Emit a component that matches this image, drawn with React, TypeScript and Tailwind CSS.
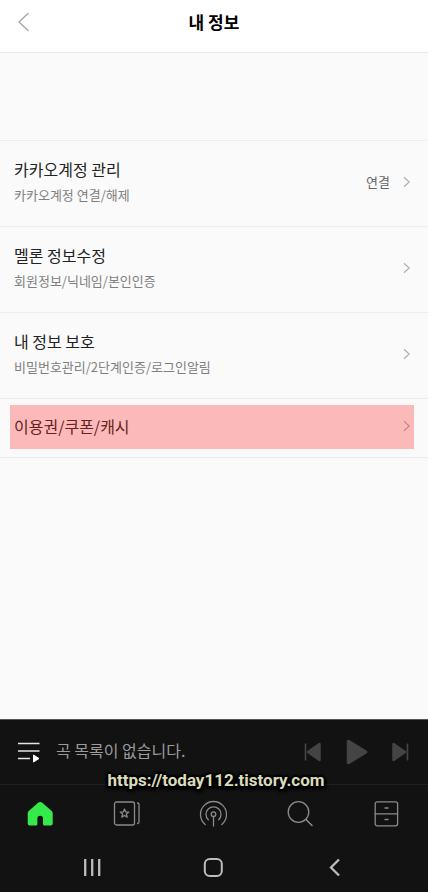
import type { ReactNode } from "react"

type MenuItem = {
  title: string
  description?: string
  value?: string
  highlighted?: boolean
}

const menuItems: MenuItem[] = [
  { title: "카카오계정 관리", description: "카카오계정 연결/해제", value: "연결" },
  { title: "멜론 정보수정", description: "회원정보/닉네임/본인인증" },
  { title: "내 정보 보호", description: "비밀번호관리/2단계인증/로그인알림" },
  { title: "이용권/쿠폰/캐시", highlighted: true },
]

function IconButton({ label, children }: { label: string; children: ReactNode }) {
  return (
    <button type="button" aria-label={label} className="flex size-7 items-center justify-center">
      {children}
    </button>
  )
}

function Header() {
  return (
    <header className="grid h-[53px] grid-cols-[1fr_auto_1fr] items-start border-b border-[#e8e8e8] bg-white pt-2">
      <div className="pl-[10px]">
        <IconButton label="뒤로">
          <svg width="28" height="28" viewBox="0 0 28 28" fill="none" stroke="#a3a3a3" strokeWidth="1.2">
            <path d="M18.5 5 9 14l9.5 9" />
          </svg>
        </IconButton>
      </div>
      <h1 className="text-[17px] leading-7 font-bold text-black">내 정보</h1>
    </header>
  )
}

function MenuRow({ title, description, value, highlighted }: MenuItem) {
  return (
    <li className="relative border-b border-[#ededed]">
      <a href="#" className={`flex items-center justify-between pr-4 pb-1 pl-[14px] ${highlighted ? "h-[58px]" : "h-[85px]"}`}>
        <span className="flex flex-col">
          <span className="text-base leading-[26px] text-[#222222]">{title}</span>
          {description && <span className="text-[13px] leading-[26px] text-[#808080]">{description}</span>}
        </span>
        <span className="flex items-center gap-3">
          {value && <span className="text-[13px] leading-6 text-[#666666]">{value}</span>}
          <svg width="10" height="12" viewBox="0 0 10 12" fill="none" stroke="#b0b0b0" strokeWidth="1.2">
            <path d="M2 1.2 7.2 6 2 10.8" />
          </svg>
        </span>
      </a>
      {/* Highlight marker */}
      {highlighted && <div className="pointer-events-none absolute top-[6px] right-[14px] bottom-2 left-[10px] bg-[#ff2525]/30" />}
    </li>
  )
}

function Player() {
  return (
    <section className="flex h-[66px] items-center border-t border-b border-t-[#555555] border-b-[#202020] px-[14px]">
      <IconButton label="재생 목록">
        <svg width="28" height="28" viewBox="0 0 28 28" fill="none">
          <path d="M4 5.5h21.500M4 13h21.500M4 20.500h12" stroke="#e5e5e5" strokeWidth="1.5" />
          <path d="M19.500 17v7l5.500-3.500z" fill="#fff" stroke="#fff" strokeLinejoin="round" />
        </svg>
      </IconButton>
      <p className="ml-[14px] flex-1 pb-1 text-base text-[#9b9b9b]">곡 목록이 없습니다.</p>
      <div className="flex items-center gap-4 text-[#444444]">
        <IconButton label="이전 곡">
          <svg width="28" height="28" viewBox="0 0 28 28" fill="currentColor" stroke="currentColor" strokeLinejoin="round">
            <path d="M7.500 5.500v17" strokeWidth="1.7" />
            <path d="M21.500 6v16L10 14z" strokeWidth="2.500" />
          </svg>
        </IconButton>
        <IconButton label="재생">
          <svg width="28" height="28" viewBox="0 0 28 28" fill="currentColor" stroke="currentColor" strokeLinejoin="round">
            <path d="M6.500 3.500v21L23.500 14z" strokeWidth="3.500" />
          </svg>
        </IconButton>
        <IconButton label="다음 곡">
          <svg width="28" height="28" viewBox="0 0 28 28" fill="currentColor" stroke="currentColor" strokeLinejoin="round">
            <path d="M21.500 5.500v17" strokeWidth="1.7" />
            <path d="M7.500 6v16L19 14z" strokeWidth="2.500" />
          </svg>
        </IconButton>
      </div>
    </section>
  )
}

function TabBar() {
  return (
    <nav className="flex h-[57px] items-center justify-between pr-7 pl-[26px] text-[#8a8a8a]">
      <IconButton label="홈">
        <svg width="28" height="28" viewBox="0 0 28 28" fill="#35e94a">
          <path d="M12.400 2.600c1-.9 2.600-.9 3.600 0l9.400 8.100c.9.800 1.300 1.500 1.300 2.600V23.500a2 2 0 0 1-2 2H18.500a1.500 1.500 0 0 1-1.500-1.500V18.500a2.800 2.800 0 0 0-5.600 0V24a1.500 1.500 0 0 1-1.500 1.500H3.700a2 2 0 0 1-2-2V13.300c0-1.100.4-1.800 1.300-2.600z" />
        </svg>
      </IconButton>
      <IconButton label="음악">
        <svg width="28" height="28" viewBox="0 0 28 28" fill="none" stroke="currentColor" strokeWidth="1.3" strokeLinejoin="round">
          <rect x="1.5" y="2" width="20" height="23" rx="2" />
          <path d="M24 3h.5A1.500 1.500 0 0 1 26 4.500V22a1.500 1.500 0 0 1-1.500 1.500H24" />
          <path d="m11.500 9 1.200 2.900 3.100.2-2.400 2 .8 3-2.700-1.600-2.700 1.600.8-3-2.400-2 3.100-.2z" />
        </svg>
      </IconButton>
      <IconButton label="라디오">
        <svg width="28" height="28" viewBox="0 0 28 28" fill="none" stroke="currentColor" strokeWidth="1.3" strokeLinecap="round">
          <path d="M6.200 24.500A13 13 0 1 1 22.800 24.500" />
          <path d="M9.300 19.700A7.500 7.500 0 1 1 19.700 19.700" />
          <circle cx="14.5" cy="14.2" r="2.3" />
          <path d="M14.500 16.500v9.500" />
        </svg>
      </IconButton>
      <IconButton label="검색">
        <svg width="28" height="28" viewBox="0 0 28 28" fill="none" stroke="currentColor" strokeWidth="1.3" strokeLinecap="round">
          <circle cx="12.5" cy="12" r="10.3" />
          <path d="m20 19.500 6 6" strokeWidth="1.6" />
        </svg>
      </IconButton>
      <IconButton label="보관함">
        <svg width="28" height="28" viewBox="0 0 28 28" fill="none" stroke="currentColor" strokeWidth="1.3" strokeLinecap="round">
          <rect x="3.2" y="1.8" width="22.4" height="24" rx="2" />
          <path d="M3.200 13.800h22.400M13 8h3M13 19.500h3" />
        </svg>
      </IconButton>
    </nav>
  )
}

function SystemBar() {
  return (
    <div className="flex h-[50px] items-center justify-between pr-20 pl-[78px] text-[#bdbdbd]">
      <IconButton label="최근 앱">
        <svg width="28" height="28" viewBox="0 0 28 28" fill="none" stroke="currentColor" strokeWidth="2.3">
          <path d="M7.200 6v17M14.200 6v17M21.200 6v17" />
        </svg>
      </IconButton>
      <IconButton label="홈 화면">
        <svg width="28" height="28" viewBox="0 0 28 28" fill="none" stroke="currentColor" strokeWidth="2">
          <rect x="5.8" y="6" width="17" height="17" rx="5" />
        </svg>
      </IconButton>
      <IconButton label="이전">
        <svg width="28" height="28" viewBox="0 0 28 28" fill="none" stroke="currentColor" strokeWidth="2.3">
          <path d="M19 6.500 11 14.500l8 8" />
        </svg>
      </IconButton>
    </div>
  )
}

export default function App() {
  return (
    <div className="flex min-h-screen flex-col bg-[#fafafa] font-['Noto_Sans_CJK_KR',sans-serif]">
      <Header />
      <main className="flex-1 pt-[87px]">
        <ul className="border-t border-[#ededed]">
          {menuItems.map((item) => (
            <MenuRow key={item.title} {...item} />
          ))}
        </ul>
      </main>
      <footer className="relative bg-[#121212]">
        <Player />
        <TabBar />
        <SystemBar />
        {/* Blog address */}
        <p className="absolute inset-x-0 top-[49px] pl-1 text-center font-[Roboto,sans-serif] text-[17px] leading-6 font-bold text-[#dadbba] [text-shadow:0_0_3px_#000,2px_0_2px_#000,-2px_0_2px_#000,0_2px_2px_#000,0_-2px_2px_#000,3px_3px_3px_#000,-2px_3px_3px_#000]">
          https://today112.tistory.com
        </p>
      </footer>
    </div>
  )
}
